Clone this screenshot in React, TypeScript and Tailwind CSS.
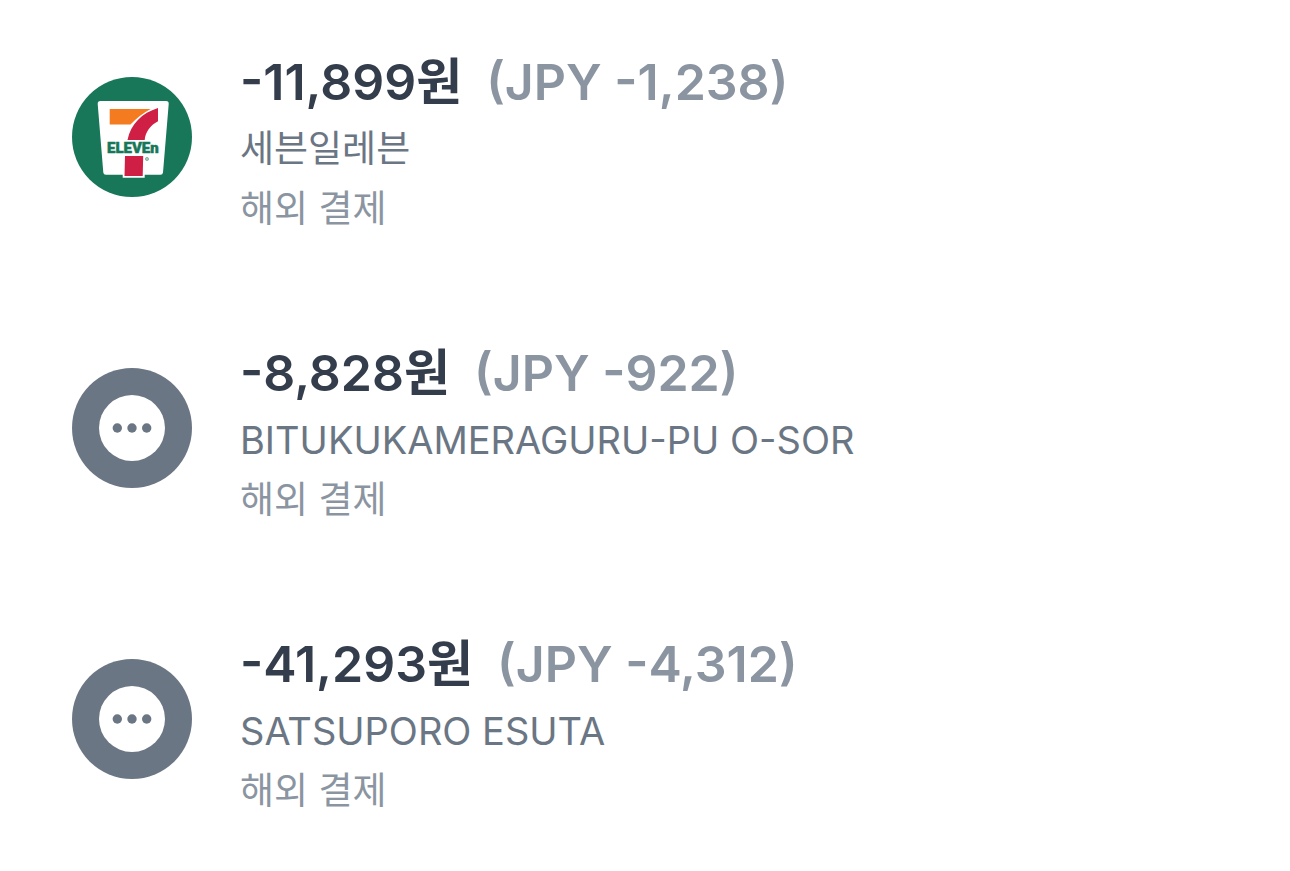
type Payment = { amount: string; foreign: string; merchant: string; kind: string; logo: 'seven' | 'more' };

const payments: Payment[] = [
  { amount: '-11,899원', foreign: '(JPY -1,238)', merchant: '세븐일레븐', kind: '해외 결제', logo: 'seven' },
  { amount: '-8,828원', foreign: '(JPY -922)', merchant: 'BITUKUKAMERAGURU-PU O-SOR', kind: '해외 결제', logo: 'more' },
  { amount: '-41,293원', foreign: '(JPY -4,312)', merchant: 'SATSUPORO ESUTA', kind: '해외 결제', logo: 'more' },
];

const isKorean = (text: string) => /[가-힣]/.test(text);

function SevenElevenLogo() {
  return (
    <svg viewBox="0 0 120 120" className="size-30 shrink-0" role="img" aria-label="7-Eleven">
      <circle cx="60" cy="60" r="60" fill="#177758" />
      <path d="M28.500 24H94Q97 24 96.700 27L91 95.500Q90.700 97.700 88.500 97.700H72.700V100.700H50.700V97.700H34Q31.500 97.700 31.300 95.500L25.700 27Q25.500 24 28.500 24Z" fill="#fff" />
      <path d="M37.700 32H78.700Q68 37.500 58.500 47.500H37.700Z" fill="#f47b20" />
      <path d="M86 31V44.300C78 48.500 73.500 55 72.700 63H55.500C58.500 47 70 36 86 31Z" fill="#cf1f45" />
      <path d="M53 79H71.200L70.700 99H52.500Z" fill="#cf1f45" />
      <text x="35" y="76" fontSize="15" fontWeight="900" fontFamily="Roboto, sans-serif" fill="#177758" stroke="#177758" strokeWidth="0.5">ELEVEn</text>
      <circle cx="75" cy="82" r="1.600" fill="none" stroke="#177758" strokeWidth="0.5" />
      <circle cx="75" cy="82" r="0.700" fill="#177758" />
    </svg>
  );
}

function MoreIcon() {
  return (
    <svg viewBox="0 0 120 120" className="size-30 shrink-0" aria-hidden="true">
      <circle cx="60" cy="60" r="60" fill="#6b7684" />
      <circle cx="60" cy="60" r="33" fill="#fff" />
      <g fill="#6b7684">
        <circle cx="45.300" cy="60" r="4.700" />
        <circle cx="60" cy="60" r="4.700" />
        <circle cx="74.700" cy="60" r="4.700" />
      </g>
    </svg>
  );
}

export default function App() {
  return (
    <main className="bg-white px-18 font-['Inter','Noto_Sans_CJK_KR',sans-serif]">
      <ul className="flex flex-col gap-[99px] pt-12">
        {payments.map((p) => (
          <li key={p.merchant} className="flex items-start gap-12">
            <div className="pt-[29px]">{p.logo === 'seven' ? <SevenElevenLogo /> : <MoreIcon />}</div>
            <div className="whitespace-nowrap">
              <p className="flex gap-6 text-[50px] leading-[68px] font-semibold text-[#333d4b] [font-feature-settings:'case']">
                <span>{p.amount}</span>
                <span className="text-[#8b95a1]">{p.foreign}</span>
              </p>
              <p className={`mt-1 leading-[58px] text-[#6b7684] ${isKorean(p.merchant) ? 'text-[37px]' : 'text-[38px]'}`}>
                {p.merchant}
              </p>
              <p className="text-[37px] leading-[62px] text-[#8b95a1]">{p.kind}</p>
            </div>
          </li>
        ))}
      </ul>
    </main>
  );
}
